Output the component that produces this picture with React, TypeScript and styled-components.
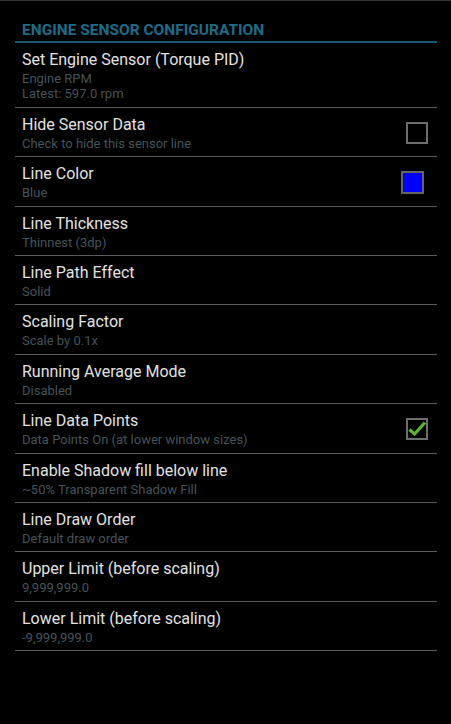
import React from "react";
import styled, { createGlobalStyle } from "styled-components";

const Global = createGlobalStyle`
  html, body { margin: 0; padding: 0; background: #000; }
  body { font-family: Roboto, "Noto Sans", sans-serif; -webkit-font-smoothing: antialiased; }
`;

const Screen = styled.div`
  width: 451px;
  height: 724px;
  background: #000;
  border-top: 1px solid #383838;
  box-sizing: border-box;
  padding: 0 14px 0 15px;
`;

const Header = styled.div`
  margin-top: 20px;
  padding: 0 7px 2px;
  font-size: 15.5px;
  line-height: 18px;
  font-weight: 700;
  color: #1d6c88;
  border-bottom: 2px solid #1b5b72;
`;

const List = styled.div`
  display: flex;
  flex-direction: column;
`;

const Row = styled.div<{ $first?: boolean }>`
  display: flex;
  align-items: center;
  justify-content: space-between;
  padding: ${(p) => (p.$first ? "7px 9px 5.8px 7px" : "7px 9px 4.9px 7px")};
  border-bottom: 1px solid #5a5a5a;
`;

const Texts = styled.div`
  display: flex;
  flex-direction: column;
  gap: 3px;
`;

const Title = styled.div`
  font-size: 16px;
  line-height: 19px;
  color: #e2e2e2;
`;

const Summary = styled.div`
  font-size: 13px;
  line-height: 14.5px;
  color: #46535a;
  white-space: pre-line;
`;

const Box = styled.div`
  width: 22px;
  height: 22px;
  box-sizing: border-box;
  border: 2px solid #6e6e6e;
  display: flex;
  align-items: center;
  justify-content: center;
`;

const Swatch = styled.div<{ $color: string }>`
  width: 23px;
  height: 23px;
  margin-right: 4px;
  box-sizing: border-box;
  border: 2px solid #666;
  background: ${(p) => p.$color};
`;

type Item = {
  title: string;
  summary: string;
  widget?: "box" | "checked" | "swatch";
};

const items: Item[] = [
  { title: "Set Engine Sensor (Torque PID)", summary: "Engine RPM\nLatest: 597.0 rpm" },
  { title: "Hide Sensor Data", summary: "Check to hide this sensor line", widget: "box" },
  { title: "Line Color", summary: "Blue", widget: "swatch" },
  { title: "Line Thickness", summary: "Thinnest (3dp)" },
  { title: "Line Path Effect", summary: "Solid" },
  { title: "Scaling Factor", summary: "Scale by 0.1x" },
  { title: "Running Average Mode", summary: "Disabled" },
  { title: "Line Data Points", summary: "Data Points On (at lower window sizes)", widget: "checked" },
  { title: "Enable Shadow fill below line", summary: "~50% Transparent Shadow Fill" },
  { title: "Line Draw Order", summary: "Default draw order" },
  { title: "Upper Limit (before scaling)", summary: "9,999,999.0" },
  { title: "Lower Limit (before scaling)", summary: "-9,999,999.0" },
];

const Check = () => (
  <svg width="20" height="20" viewBox="0 0 20 20" style={{ overflow: "visible" }}>
    <path d="M2.5 10.5 L7.5 15 L18 3.5" fill="none" stroke="#5cb52d" strokeWidth="3.2" />
  </svg>
);

export default function App() {
  return (
    <>
      <Global />
      <Screen>
        <Header>ENGINE SENSOR CONFIGURATION</Header>
        <List>
          {items.map((it, i) => (
            <Row key={it.title} $first={i === 0}>
              <Texts>
                <Title>{it.title}</Title>
                <Summary>{it.summary}</Summary>
              </Texts>
              {it.widget === "box" && <Box />}
              {it.widget === "checked" && (
                <Box>
                  <Check />
                </Box>
              )}
              {it.widget === "swatch" && <Swatch $color="#0000ff" />}
            </Row>
          ))}
        </List>
      </Screen>
    </>
  );
}
